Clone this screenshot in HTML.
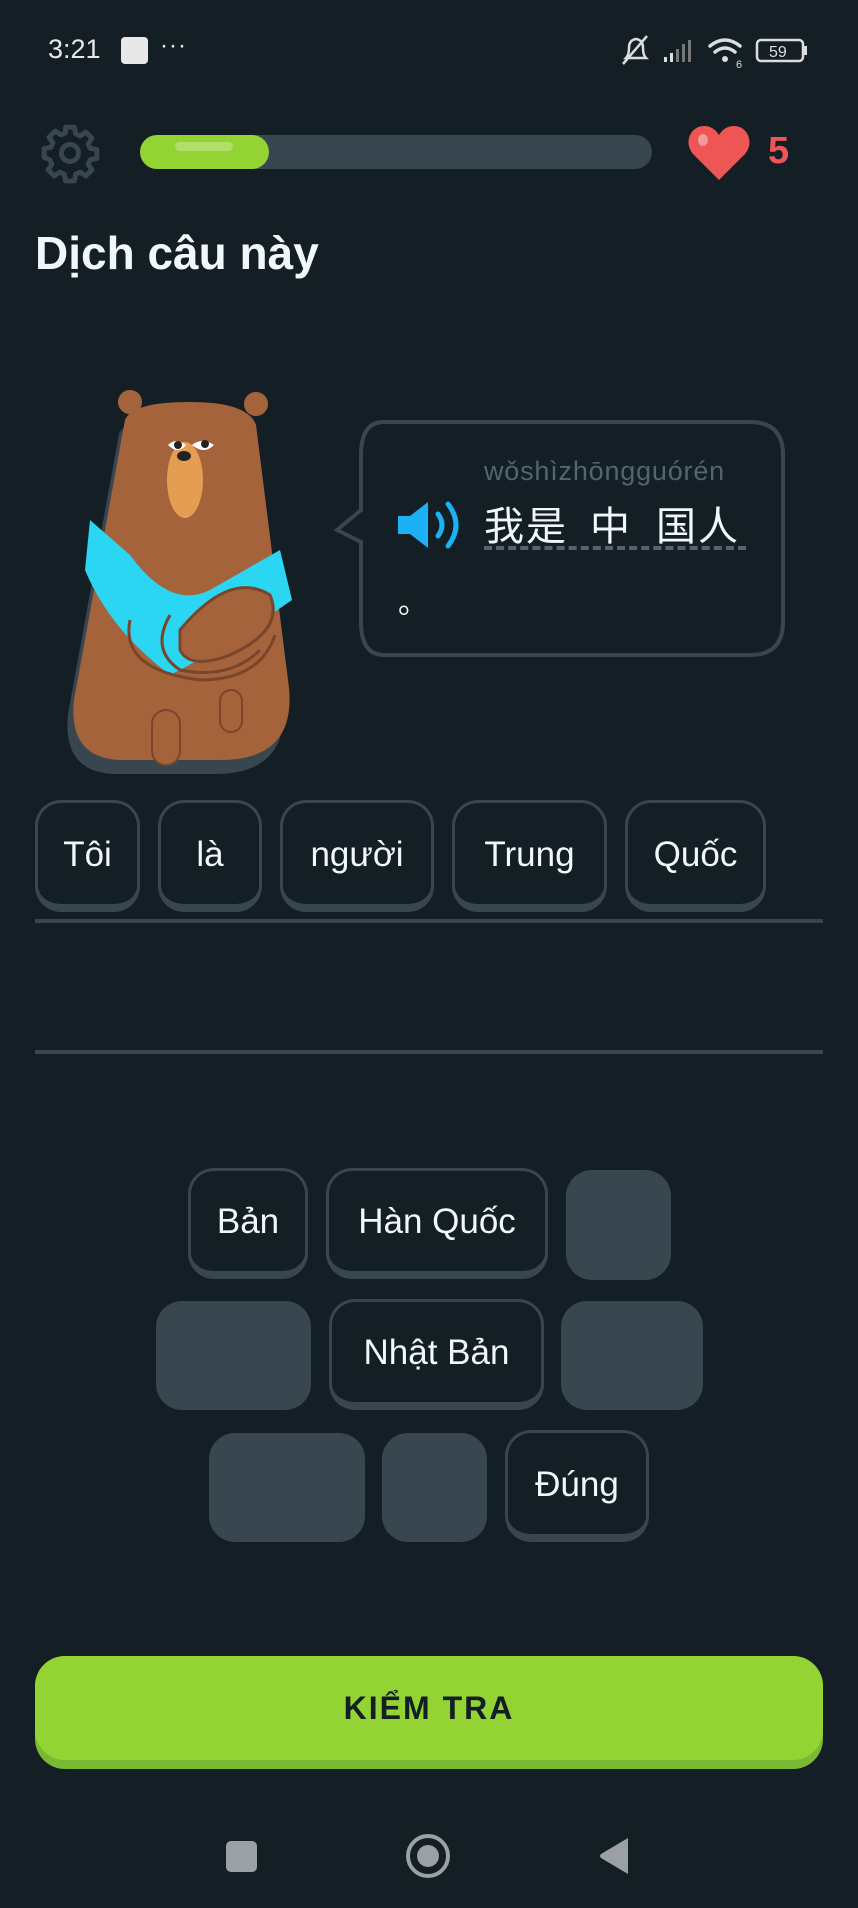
<!DOCTYPE html>
<html><head><meta charset="utf-8">
<style>
*{margin:0;padding:0;box-sizing:border-box}
body{width:858px;height:1908px;background:#131f24;position:relative;overflow:hidden;font-family:"Liberation Sans","Noto Sans CJK SC",sans-serif;color:#f1f7fb}
.abs{position:absolute}
.chip{position:absolute;border:3px solid #37464f;border-bottom-width:8px;border-radius:26px;background:#131f24;display:flex;align-items:center;justify-content:center;font-size:35px;color:#f1f7fb;padding-top:2px}
.empty{position:absolute;background:#37464f;border-radius:26px}
</style></head><body>
<div class="abs" style="left:48px;top:34px;font-size:27px;color:#e8e8e8">3:21</div>
<div class="abs" style="left:121px;top:37px;width:27px;height:27px;background:#e8e8e8;border-radius:4px"></div>
<div class="abs" style="left:160px;top:32px;font-size:24px;color:#e8e8e8;letter-spacing:1px">···</div>
<svg class="abs" style="left:620px;top:32px" width="200" height="40" viewBox="0 0 200 40">
 <g fill="none" stroke="#ddd" stroke-width="2.5"><path d="M6 26 q3-3 3-10 q0-8 7-9 q7 1 7 9 q0 7 3 10z"/><path d="M3 32 L27 4"/></g>
 <rect x="44" y="25" width="3" height="5" fill="#ddd"/><rect x="50" y="21" width="3" height="9" fill="#ddd"/><rect x="56" y="17" width="3" height="13" fill="#777"/><rect x="62" y="12" width="3" height="18" fill="#777"/><rect x="68" y="8" width="3" height="22" fill="#777"/>
 <g fill="none" stroke="#ddd" stroke-width="3.5" stroke-linecap="round"><path d="M90 14 q15-12 30 0"/><path d="M95 20 q10-8 20 0"/></g><circle cx="105" cy="27" r="3" fill="#ddd"/>
 <text x="116" y="36" font-size="11" fill="#ddd" font-family="Liberation Sans">6</text>
 <rect x="137" y="8" width="46" height="21" rx="4" fill="none" stroke="#ddd" stroke-width="2.5"/><rect x="184" y="14" width="3" height="9" fill="#ddd"/>
 <text x="149" y="25" font-size="16" fill="#ddd" font-family="Liberation Sans">59</text>
</svg>
<svg class="abs" style="left:39px;top:122px" width="62" height="62" viewBox="0 0 24 24"><path fill="none" stroke="#37464f" stroke-width="1.9" stroke-linejoin="round" d="M10.3 2h3.4l.5 2.6 1.7.8 2.2-1.5 2.4 2.4-1.5 2.2.8 1.7 2.6.5v3.4l-2.6.5-.8 1.7 1.5 2.2-2.4 2.4-2.2-1.5-1.7.8-.5 2.6h-3.4l-.5-2.6-1.7-.8-2.2 1.5-2.4-2.4 1.5-2.2-.8-1.7L2 13.7v-3.4l2.6-.5.8-1.7-1.5-2.2 2.4-2.4 2.2 1.5 1.7-.8z"/><circle cx="12" cy="12" r="3.3" fill="none" stroke="#37464f" stroke-width="1.9"/></svg>
<div class="abs" style="left:140px;top:135px;width:512px;height:34px;background:#37464f;border-radius:17px"></div>
<div class="abs" style="left:140px;top:135px;width:129px;height:34px;background:#93d333;border-radius:17px"></div>
<div class="abs" style="left:175px;top:142px;width:58px;height:9px;background:#b0e06a;border-radius:5px"></div>
<svg class="abs" style="left:687px;top:124px" width="64" height="58" viewBox="0 0 64 58"><path d="M32 56 L6 30 C-4 18 4 2 17 2 C24 2 29 6 32 11 C35 6 40 2 47 2 C60 2 68 18 58 30 Z" fill="#ee5555"/><ellipse cx="16" cy="16" rx="5" ry="6" fill="#f59a9a"/></svg>
<div class="abs" style="left:768px;top:130px;font-size:38px;font-weight:bold;color:#ee5555">5</div>
<div class="abs" style="left:35px;top:226px;font-size:46px;font-weight:bold;color:#f1f7fb">Dịch câu này</div>
<svg class="abs" style="left:60px;top:380px" width="260" height="400" viewBox="0 0 260 400">
 <path d="M65 40 Q72 22 130 22 Q188 22 196 45 L228 300 Q240 380 160 380 L60 380 Q8 378 14 320 Z" fill="#37464f" transform="translate(-6,14)"/>
 <circle cx="70" cy="22" r="12" fill="#a5633b"/><circle cx="196" cy="24" r="12" fill="#a5633b"/>
 <path d="M65 40 Q72 22 130 22 Q188 22 196 45 L228 300 Q240 380 160 380 L60 380 Q8 378 14 320 Z" fill="#a5633b"/>
 <path d="M30 140 L70 175 Q110 230 150 210 L220 170 L232 220 Q160 270 110 295 Q50 250 25 190 Z" fill="#2bd6f2"/>
 <path d="M120 250 Q170 190 210 215 Q225 250 170 275 Q130 290 120 270Z" fill="#a5633b" stroke="#7a452a" stroke-width="3"/>
 <path d="M110 235 Q90 270 120 290 Q170 300 200 270" fill="none" stroke="#7a452a" stroke-width="3"/>
 <path d="M70 240 Q60 290 140 300 Q200 300 215 255" fill="none" stroke="#7a452a" stroke-width="3"/>
 <ellipse cx="125" cy="100" rx="18" ry="38" fill="#e59d52"/>
 <path d="M108 65 q8-8 18 0 q-8 10-18 0z" fill="#fff"/><path d="M132 65 q10-8 22 0 q-10 10-22 0z" fill="#fff"/>
 <circle cx="118" cy="65" r="4" fill="#222"/><circle cx="145" cy="64" r="4" fill="#222"/>
 <ellipse cx="124" cy="76" rx="7" ry="5" fill="#222"/>
 <rect x="92" y="330" width="28" height="55" rx="14" fill="#a5633b" stroke="#7a452a" stroke-width="2"/>
 <rect x="160" y="310" width="22" height="42" rx="11" fill="#a5633b" stroke="#7a452a" stroke-width="2"/>
</svg>
<svg class="abs" style="left:330px;top:418px" width="460" height="245" viewBox="0 0 460 245">
 <path d="M54 4 H420 Q453 4 453 37 V204 Q453 237 420 237 H54 Q31 237 31 204 V124 L7 112 L31 92 V37 Q31 4 54 4 Z" fill="none" stroke="#37464f" stroke-width="4"/>
</svg>
<div class="abs" style="left:484px;top:456px;font-size:27px;color:#52656d;letter-spacing:0.8px">wǒshìzhōngguórén</div>
<svg class="abs" style="left:396px;top:498px" width="72" height="54" viewBox="0 0 72 54"><path d="M2 18 H14 L32 4 V50 L14 36 H2Z" fill="#1cb0f6"/><path d="M42 16 q8 11 0 22" fill="none" stroke="#1cb0f6" stroke-width="5" stroke-linecap="round"/><path d="M52 6 q16 21 0 42" fill="none" stroke="#1cb0f6" stroke-width="5" stroke-linecap="round"/></svg>
<div class="abs" style="left:484px;top:494px;font-size:40px;color:#f1f7fb;font-family:'Noto Sans CJK SC',sans-serif;white-space:nowrap;letter-spacing:2px"><span>我是</span><span style="margin-left:22px">中</span><span style="margin-left:24px">国人</span></div>
<div class="abs" style="left:484px;top:546px;width:262px;border-top:4px dashed #52656d"></div>
<div class="abs" style="left:398px;top:578px;font-size:30px;color:#f1f7fb;font-family:'Noto Sans CJK SC',sans-serif">。</div>
<div class="chip" style="left:35px;top:800px;width:105px;height:112px">Tôi</div>
<div class="chip" style="left:158px;top:800px;width:104px;height:112px">là</div>
<div class="chip" style="left:280px;top:800px;width:154px;height:112px">người</div>
<div class="chip" style="left:452px;top:800px;width:155px;height:112px">Trung</div>
<div class="chip" style="left:625px;top:800px;width:141px;height:112px">Quốc</div>
<div class="abs" style="left:35px;top:919px;width:788px;height:4px;background:#37464f"></div>
<div class="abs" style="left:35px;top:1050px;width:788px;height:4px;background:#37464f"></div>
<div class="chip" style="left:188px;top:1168px;width:120px;height:111px">Bản</div>
<div class="chip" style="left:326px;top:1168px;width:222px;height:111px">Hàn Quốc</div>
<div class="empty" style="left:566px;top:1170px;width:105px;height:110px"></div>
<div class="empty" style="left:156px;top:1301px;width:155px;height:109px"></div>
<div class="chip" style="left:329px;top:1299px;width:215px;height:111px">Nhật Bản</div>
<div class="empty" style="left:561px;top:1301px;width:142px;height:109px"></div>
<div class="empty" style="left:209px;top:1433px;width:156px;height:109px"></div>
<div class="empty" style="left:382px;top:1433px;width:105px;height:109px"></div>
<div class="chip" style="left:505px;top:1430px;width:144px;height:112px">Đúng</div>
<div class="abs" style="left:35px;top:1656px;width:788px;height:113px;background:#79b933;border-radius:30px"></div>
<div class="abs" style="left:35px;top:1656px;width:788px;height:104px;background:#93d333;border-radius:30px;display:flex;align-items:center;justify-content:center;font-size:32px;font-weight:bold;color:#131f24;letter-spacing:2px">KIỂM TRA</div>
<div class="abs" style="left:226px;top:1841px;width:31px;height:31px;background:#9aa0a6;border-radius:5px"></div>
<div class="abs" style="left:406px;top:1834px;width:44px;height:44px;border:4px solid #9aa0a6;border-radius:50%"></div>
<div class="abs" style="left:417px;top:1845px;width:22px;height:22px;background:#9aa0a6;border-radius:50%"></div>
<svg class="abs" style="left:598px;top:1836px" width="32" height="40" viewBox="0 0 32 40"><path d="M30 2 V38 L3 22 Q1 20 3 18 Z" fill="#9aa0a6"/></svg>
</body></html>
